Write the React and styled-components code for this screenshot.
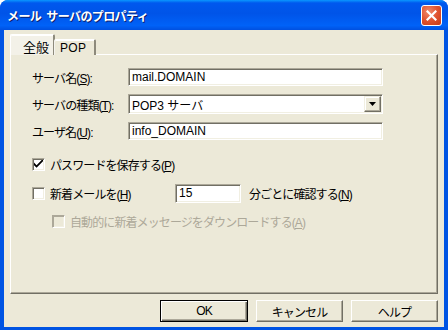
import React from 'react'
import styled, { createGlobalStyle } from 'styled-components'

const GlobalStyle = createGlobalStyle`
  html, body {
    margin: 0;
    padding: 0;
    background: #ffffff;
  }
  body {
    font-family: "Liberation Sans", "Noto Sans CJK JP", sans-serif;
    font-size: 12px;
    letter-spacing: -0.9px;
    color: #000000;
  }
`

const Window = styled.div`
  width: 448px;
  height: 330px;
  display: flex;
  flex-direction: column;
  box-sizing: border-box;
  border-radius: 8px 8px 0 0;
  overflow: hidden;
  background: #0054e3;
`

const TitleBar = styled.div`
  height: 30px;
  flex: none;
  display: flex;
  align-items: center;
  justify-content: space-between;
  padding: 0 6px 0 7px;
  box-sizing: border-box;
  background: linear-gradient(
    to bottom,
    #0a97ff 0%,
    #0058ee 10%,
    #0054e8 45%,
    #0062f8 85%,
    #0050e0 100%
  );
`

const TitleText = styled.span`
  color: #ffffff;
  font-family: "Noto Sans CJK JP", sans-serif;
  font-weight: 700;
  font-size: 12px;
  letter-spacing: -0.6px;
  word-spacing: 3px;
  text-shadow: 1px 1px 0 #0a1e6e;
`

const CloseButton = styled.div`
  width: 21px;
  height: 21px;
  box-sizing: border-box;
  border: 1px solid #ffffff;
  border-radius: 3px;
  background: radial-gradient(circle at 35% 30%, #f08a6c 0%, #e0532f 50%, #c83a16 100%);
  display: flex;
  align-items: center;
  justify-content: center;
`

const Body = styled.div`
  flex: 1;
  display: flex;
  flex-direction: column;
  margin: 0 4px 4px 4px;
  padding: 5px 6px 5px 6px;
  background: #ece9d8;
`

const TabStrip = styled.div`
  display: flex;
  align-items: flex-end;
  height: 20px;
  position: relative;
  z-index: 1;
  margin-bottom: -1px;
`

const Tab = styled.div`
  box-sizing: border-box;
  height: ${p => (p.$active ? '21px' : '16px')};
  width: ${p => p.$w}px;
  padding: ${p => (p.$active ? '2px 0 0 12px' : '1px 0 0 5px')};
  background: ${p => (p.$active ? '#f3f1e8' : '#ece9d8')};
  border-top: 1px solid #ffffff;
  border-left: 1px solid ${p => (p.$active ? '#ffffff' : '#f4f3ee')};
  border-right: 2px solid #8d8a7c;
  border-radius: 2px 2px 0 0;
  font-size: ${p => (p.$active ? '13px' : '12px')};
  letter-spacing: ${p => (p.$active ? '0' : '0.3px')};
  box-shadow: inset 0 1px 0 #ffffff;
  margin-left: ${p => (p.$active ? '0' : '-1px')};
`

const Panel = styled.div`
  height: 240px;
  box-sizing: border-box;
  background: #ece9d8;
  border-top: 1px solid #ffffff;
  border-left: 1px solid #ffffff;
  border-right: 1px solid #716f64;
  border-bottom: 1px solid #716f64;
  box-shadow: inset -1px -1px 0 #aca899;
  padding: 13px 0 0 21px;
`

const Fields = styled.div`
  display: grid;
  grid-template-columns: 96px 255px;
  grid-template-rows: 18px 20px 18px;
  row-gap: 8px;
  align-items: center;
`

const Label = styled.label`
  white-space: nowrap;
`

const Sunken = styled.div`
  box-sizing: border-box;
  height: ${p => p.$h || 18}px;
  width: ${p => p.$w ? `${p.$w}px` : '100%'};
  background: #ffffff;
  border-top: 1px solid #aca899;
  border-left: 1px solid #aca899;
  border-right: 1px solid #ffffff;
  border-bottom: 1px solid #ffffff;
  box-shadow: inset 1px 1px 0 #716f64, inset -1px -1px 0 #f1efe2;
  display: flex;
  align-items: center;
  padding-left: 3px;
  white-space: nowrap;
  letter-spacing: 0;
`

const DropButton = styled.div`
  margin-left: auto;
  width: 17px;
  height: 16px;
  box-sizing: border-box;
  background: #ece9d8;
  border-top: 1px solid #f1efe2;
  border-left: 1px solid #f1efe2;
  border-right: 1px solid #716f64;
  border-bottom: 1px solid #716f64;
  box-shadow: inset -1px -1px 0 #aca899, inset 1px 1px 0 #ffffff;
  display: flex;
  align-items: center;
  justify-content: center;
  margin-right: 1px;
`

const Options = styled.div`
  display: flex;
  flex-direction: column;
  margin-top: 14px;
`

const CheckRow = styled.div`
  display: flex;
  align-items: center;
  height: 20px;
  margin-top: ${p => p.$top || 0}px;
  padding-left: ${p => p.$indent || 0}px;
  color: ${p => (p.$disabled ? '#aca899' : '#000000')};
`

const CheckLabel = styled.div`
  display: flex;
  align-items: center;
  gap: 5px;
  width: ${p => (p.$w ? `${p.$w}px` : 'auto')};
  white-space: nowrap;
`

const Box = styled.span`
  box-sizing: border-box;
  width: 13px;
  height: 13px;
  flex: none;
  background: ${p => (p.$disabled ? '#ece9d8' : '#ffffff')};
  border-top: 1px solid #aca899;
  border-left: 1px solid #aca899;
  border-right: 1px solid #ffffff;
  border-bottom: 1px solid #ffffff;
  box-shadow: ${p => (p.$disabled
    ? 'inset 1px 1px 0 #aca899, inset -1px -1px 0 #f1efe2'
    : 'inset 1px 1px 0 #716f64, inset -1px -1px 0 #f1efe2')};
  display: flex;
  align-items: center;
  justify-content: center;
`

const Trailing = styled.span`
  margin-left: 8px;
  white-space: nowrap;
`

const Footer = styled.div`
  display: flex;
  justify-content: flex-end;
  gap: 8px;
  margin-top: 6px;
`

const Button = styled.button`
  width: ${p => (p.$default ? 88 : 87)}px;
  height: 22px;
  box-sizing: border-box;
  font-family: "Liberation Sans", "Noto Sans CJK JP", sans-serif;
  font-size: 12px;
  letter-spacing: -0.9px;
  color: #000000;
  background: #ece9d8;
  padding: 0;
  border-top: 1px solid ${p => (p.$default ? '#000000' : '#ffffff')};
  border-left: 1px solid ${p => (p.$default ? '#000000' : '#ffffff')};
  border-right: 1px solid ${p => (p.$default ? '#000000' : '#716f64')};
  border-bottom: 1px solid ${p => (p.$default ? '#000000' : '#716f64')};
  box-shadow: ${p => (p.$default
    ? 'inset 1px 1px 0 #ffffff, inset -1px -1px 0 #716f64, inset -2px -2px 0 #aca899'
    : 'inset -1px -1px 0 #aca899')};
`

const Check = () => (
  <svg width='9' height='9' viewBox='0 0 7 7'>
    <path d='M0 2 L0 4 L2 6 L7 1 L7 -1 L2 4 Z' fill='#000' />
  </svg>
)

const Cross = () => (
  <svg width='11' height='11' viewBox='0 0 11 11'>
    <path d='M1.5 1.5 L9.5 9.5 M9.5 1.5 L1.5 9.5' stroke='#ffffff' strokeWidth='2.2' strokeLinecap='square' />
  </svg>
)

const Arrow = () => (
  <svg width='7' height='4' viewBox='0 0 7 4'>
    <path d='M0 0 H7 L3.5 4 Z' fill='#000' />
  </svg>
)

const App = () => (
  <>
    <GlobalStyle />
    <Window>
      <TitleBar>
        <TitleText>メール サーバのプロパティ</TitleText>
        <CloseButton><Cross /></CloseButton>
      </TitleBar>
      <Body>
        <TabStrip>
          <Tab $active $w={45}>全般</Tab>
          <Tab $w={42}>POP</Tab>
        </TabStrip>
        <Panel>
          <Fields>
            <Label>サーバ名(<u>S</u>):</Label>
            <Sunken>mail.DOMAIN</Sunken>
            <Label>サーバの種類(<u>T</u>):</Label>
            <Sunken $h={20}>
              POP3 サーバ
              <DropButton><Arrow /></DropButton>
            </Sunken>
            <Label>ユーザ名(<u>U</u>):</Label>
            <Sunken>info_DOMAIN</Sunken>
          </Fields>
          <Options>
            <CheckRow>
              <CheckLabel>
                <Box><Check /></Box>
                <span>パスワードを保存する(<u>P</u>)</span>
              </CheckLabel>
            </CheckRow>
            <CheckRow $top={9}>
              <CheckLabel $w={143}>
                <Box />
                <span>新着メールを(<u>H</u>)</span>
              </CheckLabel>
              <Sunken $w={66} $h={19}>15</Sunken>
              <Trailing>分ごとに確認する(<u>N</u>)</Trailing>
            </CheckRow>
            <CheckRow $top={8} $indent={20} $disabled>
              <CheckLabel>
                <Box $disabled />
                <span>自動的に新着メッセージをダウンロードする(<u>A</u>)</span>
              </CheckLabel>
            </CheckRow>
          </Options>
        </Panel>
        <Footer>
          <Button $default>OK</Button>
          <Button>キャンセル</Button>
          <Button>ヘルプ</Button>
        </Footer>
      </Body>
    </Window>
  </>
)

export default App
